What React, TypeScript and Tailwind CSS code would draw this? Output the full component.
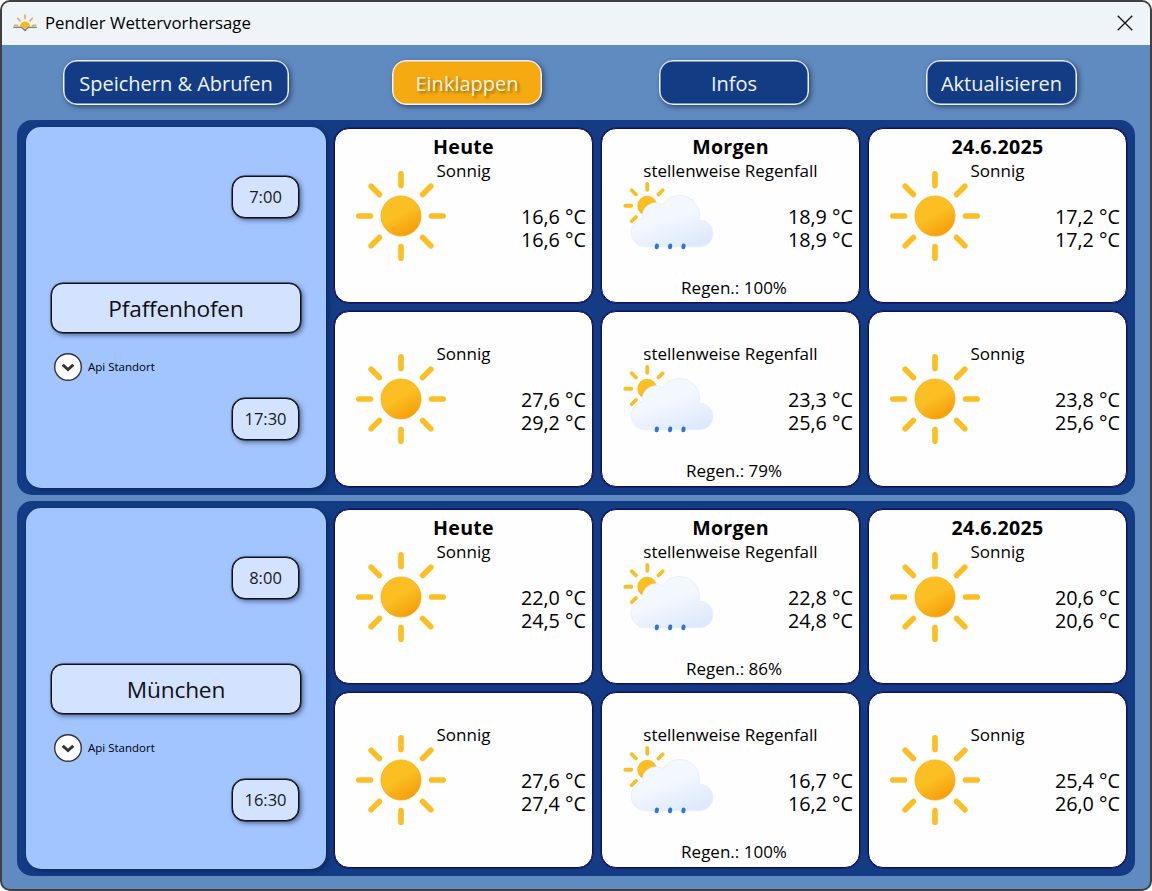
import React from "react";

type Kind = "sun" | "rain";
interface Forecast {
  title?: string;
  kind: Kind;
  a: string;
  b: string;
  rain?: string;
}
interface Place {
  name: string;
  from: string;
  to: string;
  cells: Forecast[];
}

const places: Place[] = [
  {
    name: "Pfaffenhofen",
    from: "7:00",
    to: "17:30",
    cells: [
      { title: "Heute", kind: "sun", a: "16,6", b: "16,6" },
      { title: "Morgen", kind: "rain", a: "18,9", b: "18,9", rain: "100%" },
      { title: "24.6.2025", kind: "sun", a: "17,2", b: "17,2" },
      { kind: "sun", a: "27,6", b: "29,2" },
      { kind: "rain", a: "23,3", b: "25,6", rain: "79%" },
      { kind: "sun", a: "23,8", b: "25,6" },
    ],
  },
  {
    name: "München",
    from: "8:00",
    to: "16:30",
    cells: [
      { title: "Heute", kind: "sun", a: "22,0", b: "24,5" },
      { title: "Morgen", kind: "rain", a: "22,8", b: "24,8", rain: "86%" },
      { title: "24.6.2025", kind: "sun", a: "20,6", b: "20,6" },
      { kind: "sun", a: "27,6", b: "27,4" },
      { kind: "rain", a: "16,7", b: "16,2", rain: "100%" },
      { kind: "sun", a: "25,4", b: "26,0" },
    ],
  },
];

function Gradients() {
  return (
    <svg width="0" height="0" className="absolute">
      <defs>
        <linearGradient id="sunFill" x1="0.25" y1="0.07" x2="0.75" y2="0.93">
          <stop offset="0" stopColor="#fbbf24" />
          <stop offset="0.45" stopColor="#fbbf24" />
          <stop offset="1" stopColor="#f59e0b" />
        </linearGradient>
        <linearGradient id="cloudFill" x1="0.25" y1="0.05" x2="0.75" y2="0.95">
          <stop offset="0" stopColor="#f3f7fe" />
          <stop offset="0.45" stopColor="#f3f7fe" />
          <stop offset="1" stopColor="#deeafb" />
        </linearGradient>
      </defs>
    </svg>
  );
}

function SunIcon() {
  return (
    <svg viewBox="0 0 64 64" className="col-start-1 row-start-1 ml-[6px] mt-[27px] h-[120px] w-[120px]">
      <circle cx="32" cy="32" r="10.7" fill="url(#sunFill)" stroke="#f8af18" strokeWidth="0.4" />
      <path
        d="M32 15.71V9.5m0 45v-6.21m11.52-27.81l4.39-4.39M16.09 47.91l4.39-4.39m0-23.04l-4.39-4.39m31.82 31.82l-4.39-4.39M15.71 32H9.5m45 0h-6.21"
        fill="none"
        stroke="#fbbf24"
        strokeLinecap="round"
        strokeWidth="3"
      />
    </svg>
  );
}

function RainIcon() {
  return (
    <svg viewBox="0 0 64 64" className="col-start-1 row-start-1 ml-[9px] mt-[31px] h-[122px] w-[122px]">
      <circle cx="19" cy="24" r="5.2" fill="url(#sunFill)" />
      <path
        d="M19 15.67V12.5m5.89 5.61l2.24-2.24M10.87 32.13l2.24-2.24m0-11.78l-2.24-2.24M10.67 24H7.5"
        fill="none"
        stroke="#fbbf24"
        strokeLinecap="round"
        strokeWidth="2"
      />
      <path
        d="M46.5 31.5h-.32a10.49 10.49 0 00-19.11-8 7 7 0 00-10.57 6 7.21 7.21 0 00.1 1.14A7.5 7.5 0 0018 45.5a4.19 4.19 0 00.5 0v0h28a7 7 0 000-14z"
        fill="url(#cloudFill)"
        stroke="#e6effc"
        strokeWidth="0.5"
      />
      <path
        d="M24.1 44.85l-.15.9M31.1 44.85l-.15.9M38.1 44.85l-.15.9"
        fill="none"
        stroke="#2f73dc"
        strokeLinecap="round"
        strokeWidth="2.1"
      />
    </svg>
  );
}

function Card({ f }: { f: Forecast }) {
  return (
    <div className="grid h-[175.5px] w-[259px] grid-cols-1 grid-rows-1 overflow-hidden rounded-[15px] border border-[#10105a] bg-[#fdfefd] text-black shadow-[0_0_0_0.5px_#10105a]">
      {f.kind === "sun" ? <SunIcon /> : <RainIcon />}
      <div className="col-start-1 row-start-1 flex flex-col whitespace-nowrap">
        <div className="mt-[5px] h-[26px] text-center text-[19.6px] font-bold leading-[26px] tracking-[0.25px]">{f.title}</div>
        <div className="h-[22px] text-center text-[17px] leading-[22px]">
          {f.kind === "sun" ? "Sonnig" : "stellenweise Regenfall"}
        </div>
        <div className="mt-[23px] whitespace-pre-line pr-[6px] text-right text-[19.8px] leading-[23px]">
          {`${f.a} °C\n${f.b} °C`}
        </div>
        {f.rain && (
          <div className="mt-[26px] pl-[7px] text-center text-[17px] leading-[22px]">Regen.: {f.rain}</div>
        )}
      </div>
    </div>
  );
}

const fieldShadow = "shadow-[0_0_0_0.5px_#111,2px_2px_5px_rgba(20,30,70,0.6)]";

function TimeField({ value, className }: { value: string; className: string }) {
  return (
    <div
      className={`ml-[181px] flex h-[42px] w-[67px] items-center justify-center rounded-[13px] border border-[#111] bg-[#d2e2ff] text-[16.5px] text-[#1a1a1a] ${fieldShadow} ${className}`}
    >
      {value}
    </div>
  );
}

function PlacePanel({ p }: { p: Place }) {
  return (
    <section className="flex h-[375px] w-[1118px] gap-[8px] rounded-[15px] bg-[#133c85] pl-[9px] pt-[7px]">
      <div className="flex h-[360.5px] w-[300px] flex-col rounded-[15px] bg-[#a2c4ff] pl-[25px] shadow-[2px_2px_5px_rgba(5,15,50,0.5)]">
        <TimeField value={p.from} className="mt-[49px]" />
        <div
          className={`mt-[65px] flex h-[50px] w-[250px] items-center justify-center rounded-[12px] border border-[#111] bg-[#d2e2ff] pt-[2px] text-[22.7px] tracking-[-0.2px] text-[#111] ${fieldShadow}`}
        >
          {p.name}
        </div>
        <div className="ml-[3px] mt-[19px] flex h-[29px] items-center gap-[6px]">
          <svg viewBox="0 0 28 28" className="h-[28px] w-[28px]">
            <circle cx="14" cy="14" r="13.3" fill="#fff" stroke="#333" strokeWidth="1.4" />
            <path d="M8.7 11.7l5.3 4.9 5.3-4.9" fill="none" stroke="#333" strokeWidth="2.9" />
          </svg>
          <span className="text-[11.5px] text-black">Api Standort</span>
        </div>
        <TimeField value={p.to} className="mt-[17px]" />
      </div>
      <div className="grid h-[360px] grid-cols-[259px_259px_259px] content-start gap-x-[8px] gap-y-[8px] pt-[0.5px]">
        {p.cells.map((c, i) => (
          <Card key={i} f={c} />
        ))}
      </div>
    </section>
  );
}

function TopButton({ label, active, className }: { label: string; active?: boolean; className: string }) {
  return (
    <button
      className={`flex h-[45px] shrink-0 items-center justify-center whitespace-nowrap rounded-[14px] border border-[#eef3fa] pt-[2px] text-[20px] shadow-[inset_0_0_0_0.5px_#eef3fa,2px_2px_5px_rgba(20,30,60,0.6)] ${
        active ? "bg-[#f6aa12] text-[#fbf3df] [text-shadow:2px_2px_3px_rgba(60,40,0,0.5)]" : "bg-[#133c85] text-[#eef3fb]"
      } ${className}`}
    >
      {label}
    </button>
  );
}

export default function App() {
  return (
    <div className="h-[891px] w-[1152px] bg-white font-['Open_Sans','Noto_Sans',sans-serif]">
      <Gradients />
      <div className="flex h-full w-full flex-col overflow-hidden rounded-[10px] border-2 border-[#404040] bg-[#608bc0]">
        <header className="flex h-[43px] shrink-0 items-center bg-[#eef4f7] pb-[2px] pl-[10px] pr-[17px]">
          <svg viewBox="0 0 26 20" className="h-[20px] w-[26px]">
            <path
              d="M13 5.6V2M8.1 8L5.6 5.3M17.9 8l2.5-2.7M5.6 12.6l-3.2-.3M20.4 12.6l3.2-.3"
              stroke="#d9ac4c"
              strokeWidth="1.5"
              strokeLinecap="round"
            />
            <path d="M7.8 13.6a5.2 5.2 0 0110.4 0l-2.6.4L13 16l-2.6-2z" fill="#fbb81c" />
            <path d="M1.2 14.4h8.6l3.2 3 3.2-3h8.6" fill="none" stroke="#7b8087" strokeWidth="1.4" strokeLinejoin="round" />
          </svg>
          <span className="ml-[7px] text-[16.8px] text-black">Pendler Wettervorhersage</span>
          <svg viewBox="0 0 16 16" className="ml-auto h-[16px] w-[16px]">
            <path d="M0.7 0.7l14.6 14.6M15.3 0.7L0.7 15.3" stroke="#111" strokeWidth="1.3" />
          </svg>
        </header>
        <nav className="flex h-[75px] shrink-0 pl-[61px] pt-[15px]">
          <TopButton label="Speichern & Abrufen" className="w-[226px]" />
          <TopButton label="Einklappen" active className="ml-[103px] w-[150px]" />
          <TopButton label="Infos" className="ml-[117px] w-[150px]" />
          <TopButton label="Aktualisieren" className="ml-[117px] w-[151px]" />
        </nav>
        <main className="flex flex-col gap-[6px] pl-[15px]">
          {places.map((p) => (
            <PlacePanel key={p.name} p={p} />
          ))}
        </main>
      </div>
    </div>
  );
}
